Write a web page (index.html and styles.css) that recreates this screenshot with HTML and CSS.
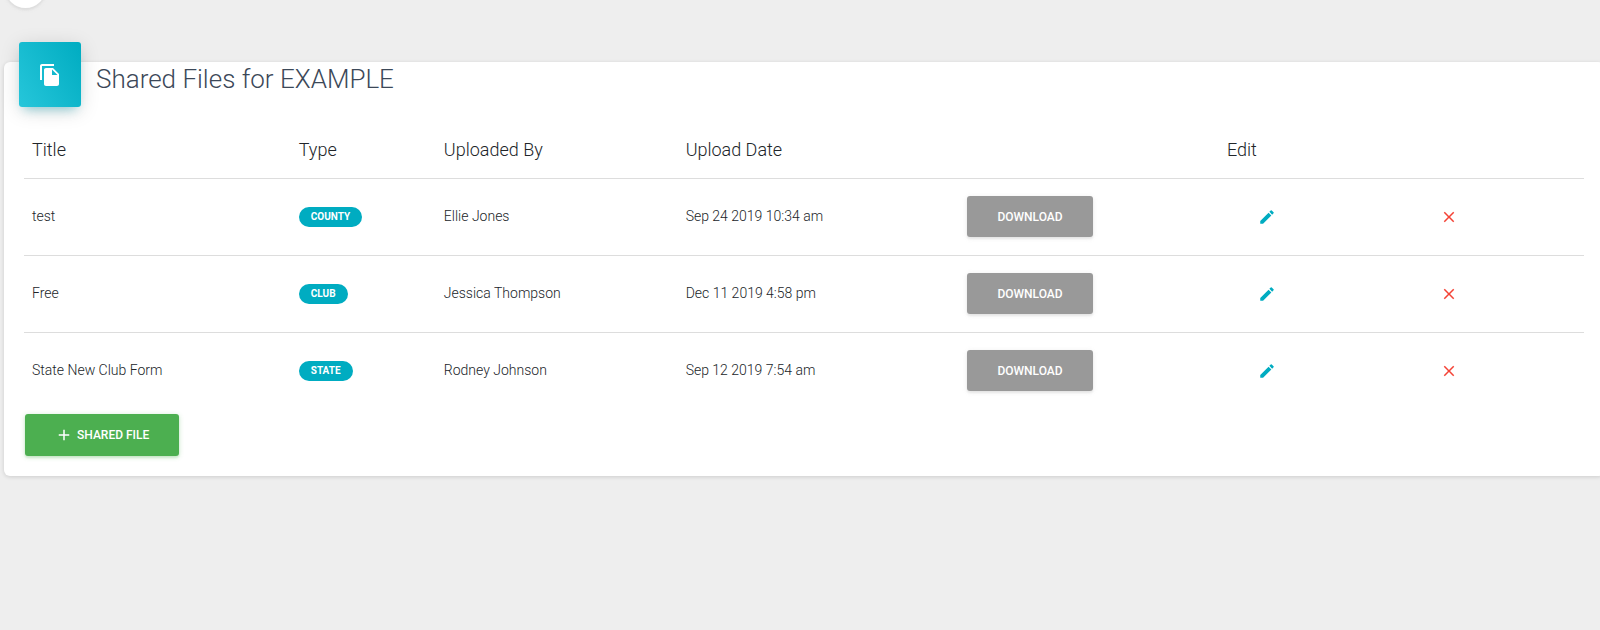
FILE: index.html
```html
<!DOCTYPE html>
<html lang="en">
<head>
<meta charset="utf-8">
<title>Shared Files for EXAMPLE</title>
<link rel="stylesheet" href="styles.css">
</head>
<body>
<svg class="sprite" aria-hidden="true">
  <symbol id="pencil" viewBox="0 0 24 24"><path d="M3 17.25V21h3.75L17.81 9.94l-3.75-3.75L3 17.25zM20.71 7.04a1 1 0 0 0 0-1.41l-2.34-2.34a1 1 0 0 0-1.41 0l-1.83 1.83 3.75 3.75 1.83-1.83z"/></symbol>
  <symbol id="close" viewBox="0 0 24 24"><path d="M19 6.41L17.59 5 12 10.59 6.41 5 5 6.41 10.59 12 5 17.59 6.41 19 12 13.41 17.59 19 19 17.59 13.41 12z"/></symbol>
</svg>
<nav class="topbar"><button class="round" type="button" aria-label="Toggle sidebar"></button></nav>
<main class="content">
  <section class="card">
    <header class="card-header">
      <div class="card-icon">
        <svg viewBox="0 0 24 24" aria-hidden="true"><path d="M16 1H4c-1.1 0-2 .9-2 2v14h2V3h12V1zm-1 4l6 6v10c0 1.1-.9 2-2 2H7.99C6.89 23 6 22.1 6 21V7c0-1.1.89-2 1.99-2H15zm-1 7h5.5L14 6.5V12z"/></svg>
      </div>
      <h1 class="card-title">Shared Files for EXAMPLE</h1>
    </header>
    <div class="card-body">
      <table class="files">
        <colgroup>
          <col class="c-title"><col class="c-type"><col class="c-by"><col class="c-date"><col class="c-download"><col class="c-edit"><col>
        </colgroup>
        <thead>
          <tr><th>Title</th><th>Type</th><th>Uploaded By</th><th>Upload Date</th><th></th><th>Edit</th><th></th></tr>
        </thead>
        <tbody>
          <tr>
            <td>test</td><td><span class="badge">County</span></td><td>Ellie Jones</td><td>Sep 24 2019 10:34 am</td>
            <td><button class="btn" type="button">Download</button></td>
            <td><button class="btn link edit" type="button" aria-label="Edit test"><svg><use href="#pencil"/></svg></button></td>
            <td><button class="btn link remove" type="button" aria-label="Remove test"><svg><use href="#close"/></svg></button></td>
          </tr>
          <tr>
            <td>Free</td><td><span class="badge">Club</span></td><td>Jessica Thompson</td><td>Dec 11 2019 4:58 pm</td>
            <td><button class="btn" type="button">Download</button></td>
            <td><button class="btn link edit" type="button" aria-label="Edit Free"><svg><use href="#pencil"/></svg></button></td>
            <td><button class="btn link remove" type="button" aria-label="Remove Free"><svg><use href="#close"/></svg></button></td>
          </tr>
          <tr>
            <td>State New Club Form</td><td><span class="badge">State</span></td><td>Rodney Johnson</td><td>Sep 12 2019 7:54 am</td>
            <td><button class="btn" type="button">Download</button></td>
            <td><button class="btn link edit" type="button" aria-label="Edit State New Club Form"><svg><use href="#pencil"/></svg></button></td>
            <td><button class="btn link remove" type="button" aria-label="Remove State New Club Form"><svg><use href="#close"/></svg></button></td>
          </tr>
        </tbody>
      </table>
      <button class="btn add" type="button"><svg viewBox="0 0 24 24" aria-hidden="true"><path d="M19 13h-6v6h-2v-6H5v-2h6V5h2v6h6v2z"/></svg>Shared File</button>
    </div>
  </section>
</main>
</body>
</html>
```

FILE: styles.css
```css
* { box-sizing: border-box; }
body {
  margin: 0;
  min-height: 100vh;
  overflow-x: hidden;
  background: #eee;
  color: #212529;
  font: 300 14px/21px Roboto, "Liberation Sans", sans-serif;
}
svg { fill: currentColor; }
.sprite { position: absolute; width: 0; height: 0; }
.topbar { height: 8px; padding-left: 5px; display: flex; align-items: flex-end; }
.round {
  flex: none;
  width: 41px;
  height: 41px;
  padding: 0;
  border: 0;
  border-radius: 50%;
  background: #fff;
  box-shadow: 0 2px 2px rgba(153, 153, 153, .14), 0 1px 5px rgba(153, 153, 153, .12);
}
.content { padding: 54px 0 0 4px; margin-right: -4px; }
.card {
  background: #fff;
  border-radius: 6px;
  box-shadow: 0 1px 4px rgba(0, 0, 0, .14);
}
.card-header { display: flex; gap: 15px; padding: 0 15px; }
.card-icon {
  display: flex;
  align-items: center;
  justify-content: center;
  width: 62px;
  height: 65px;
  margin-top: -20px;
  border-radius: 3px;
  background: linear-gradient(60deg, #26c6da, #00acc1);
  color: #fff;
  box-shadow: 0 4px 20px rgba(0, 0, 0, .14), 0 7px 10px -5px rgba(0, 172, 193, .4);
}
.card-icon svg { width: 24px; height: 24px; }
.card-title { margin: 0; color: #3c4858; font-size: 26px; font-weight: 300; line-height: 34px; }
.card-body { padding: 15px 20px 20px; }
.files { width: 100%; table-layout: fixed; border-collapse: collapse; }
.c-title { width: 17.1%; }
.c-type { width: 9.3%; }
.c-by { width: 15.5%; }
.c-date { width: 18%; }
.c-download { width: 16.7%; }
.c-edit { width: 11.7%; }
.files th { height: 56px; padding: 0 8px; text-align: left; font-size: 18px; font-weight: 300; }
.files td { height: 77px; padding: 0 8px; border-top: 1px solid #ddd; }
.badge {
  display: inline-block;
  padding: 4px 12px;
  border-radius: 12px;
  background: #00acc1;
  color: #fff;
  font-size: 10px;
  font-weight: 700;
  line-height: 12px;
  text-transform: uppercase;
  vertical-align: middle;
}
.btn {
  display: inline-flex;
  align-items: center;
  height: 41px;
  margin: 0 1px;
  padding: 0 30px;
  border: 0;
  border-radius: 3px;
  background: #999;
  color: #fff;
  font: 500 12px/18px Roboto, "Liberation Sans", sans-serif;
  text-transform: uppercase;
  vertical-align: middle;
  box-shadow: 0 2px 2px rgba(153, 153, 153, .14), 0 1px 5px rgba(153, 153, 153, .2);
}
.btn svg { width: 18px; height: 18px; }
.link { background: none; box-shadow: none; }
.edit { color: #00acc1; }
.remove { color: #f44336; }
.add {
  gap: 4px;
  height: 42px;
  margin-top: 5px;
  background: #4caf50;
  box-shadow: 0 2px 2px rgba(76, 175, 80, .14), 0 1px 5px rgba(76, 175, 80, .3);
}
```
